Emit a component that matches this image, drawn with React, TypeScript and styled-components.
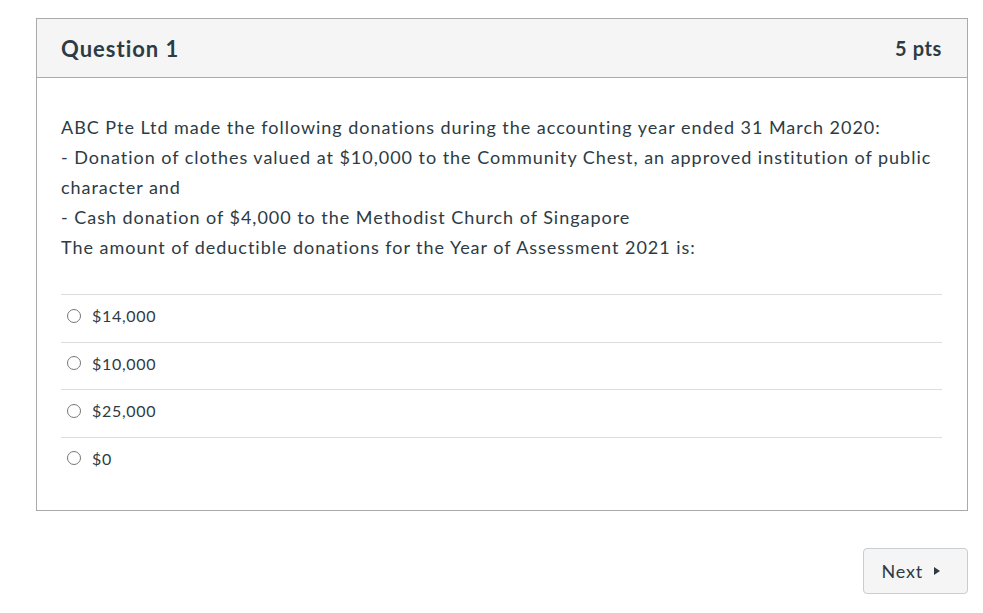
import React from "react";
import styled, { createGlobalStyle } from "styled-components";

const GlobalStyle = createGlobalStyle`
  html, body {
    margin: 0;
    padding: 0;
    background: #ffffff;
    font-family: Lato, "Helvetica Neue", Arial, sans-serif;
    color: #2d3b45;
  }
`;

const Page = styled.div`
  padding: 18px 15px 0 36px;
  width: 932px;
`;

const Card = styled.div`
  border: 1px solid #aaaaaa;
  background: #ffffff;
`;

const Header = styled.div`
  display: flex;
  justify-content: space-between;
  align-items: center;
  height: 58px;
  padding: 0 25px 0 24px;
  background: #f5f5f5;
  border-bottom: 1px solid #aaaaaa;
`;

const Title = styled.h2`
  margin: 0;
  font-size: 22px;
  letter-spacing: 1px;
  font-weight: 700;
  color: #2d3b45;
`;

const Points = styled.span`
  font-size: 20px;
  letter-spacing: 0.6px;
  font-weight: 700;
  color: #2d3b45;
`;

const Body = styled.div`
  padding: 34px 25px 26px 24px;
`;

const QuestionText = styled.div`
  font-size: 18px;
  line-height: 30px;
  letter-spacing: 0.97px;
  margin-bottom: 32px;
`;

const Answers = styled.div`
  display: flex;
  flex-direction: column;
`;

const AnswerRow = styled.label`
  display: flex;
  align-items: center;
  box-sizing: border-box;
  height: 47.5px;
  padding: 0 0 5px 6px;
  border-top: 1px solid #dddddd;
  font-size: 16px;
  letter-spacing: 0.7px;
  cursor: pointer;
`;

const Radio = styled.span`
  width: 12px;
  height: 12px;
  border: 1px solid #777777;
  border-radius: 50%;
  margin-right: 11px;
  flex-shrink: 0;
`;

const Footer = styled.div`
  display: flex;
  justify-content: flex-end;
  padding-top: 37px;
`;

const NextButton = styled.button`
  display: flex;
  align-items: center;
  gap: 11px;
  height: 46px;
  padding: 0 27px 0 18px;
  background: #f5f5f5;
  border: 1px solid #c7cdd1;
  border-radius: 4px;
  font-family: Lato, "Helvetica Neue", Arial, sans-serif;
  font-size: 18px;
  letter-spacing: 0.8px;
  color: #2d3b45;
  cursor: pointer;
`;

const Caret = styled.span`
  width: 0;
  height: 0;
  border-top: 4px solid transparent;
  border-bottom: 4px solid transparent;
  border-left: 6px solid #2d3b45;
`;

const answers = ["$14,000", "$10,000", "$25,000", "$0"];

export default function App() {
  return (
    <>
      <GlobalStyle />
      <Page>
        <Card>
          <Header>
            <Title>Question 1</Title>
            <Points>5 pts</Points>
          </Header>
          <Body>
            <QuestionText>
              ABC Pte Ltd made the following donations during the accounting year ended 31 March 2020:
              <br />- Donation of clothes valued at $10,000 to the Community Chest, an approved institution of public character and
              <br />- Cash donation of $4,000 to the Methodist Church of Singapore
              <br />The amount of deductible donations for the Year of Assessment 2021 is:
            </QuestionText>
            <Answers>
              {answers.map((a) => (
                <AnswerRow key={a}>
                  <Radio />
                  {a}
                </AnswerRow>
              ))}
            </Answers>
          </Body>
        </Card>
        <Footer>
          <NextButton>
            Next
            <Caret />
          </NextButton>
        </Footer>
      </Page>
    </>
  );
}
